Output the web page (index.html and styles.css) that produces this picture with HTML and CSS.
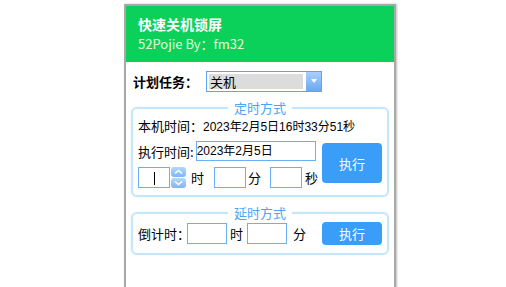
FILE: index.html
```html
<!DOCTYPE html>
<html lang="zh-CN">

<head>
    <meta charset="UTF-8">
    <title>快速关机锁屏</title>
    <link rel="stylesheet" href="styles.css">
</head>

<body>
    <div class="window">
        <div class="header">
            <div class="title">快速关机锁屏</div>
            <div class="sub">52Pojie By：fm32</div>
        </div>

        <div class="content">
            <div class="task_row">
                <span class="task_label">计划任务：</span>
                <div class="select">
                    <span class="select_value">关机</span>
                    <span class="select_btn">
                        <svg width="6" height="4" viewBox="0 0 6 4"><path d="M0 0H6L3 4Z" fill="#fff"/></svg>
                    </span>
                </div>
            </div>

            <fieldset class="group">
                <legend>定时方式</legend>
                <div class="now_row">
                    <span>本机时间：</span><span class="now_value">2023年2月5日16时33分51秒</span>
                </div>
                <div class="timed">
                    <div class="timed_left">
                        <div class="exec_row">
                            <span>执行时间:</span>
                            <div class="input date_input">2023年2月5日</div>
                        </div>
                        <div class="hms_row">
                            <div class="input small caret_box"><span class="caret"></span></div>
                            <svg class="spin" width="15" height="21" viewBox="0 0 15 21">
                                <defs>
                                    <linearGradient id="sg" x1="0" y1="0" x2="0" y2="1">
                                        <stop offset="0" stop-color="#b4d8ff"/>
                                        <stop offset="1" stop-color="#7cb6f4"/>
                                    </linearGradient>
                                </defs>
                                <rect x="0" y="0" width="15" height="10" rx="3" fill="url(#sg)"/>
                                <rect x="0" y="11" width="15" height="10" rx="3" fill="url(#sg)"/>
                                <path d="M4 6.5L7.5 3.5L11 6.5" stroke="#fff" stroke-width="1.5" fill="none"/>
                                <path d="M4 14.5L7.5 17.5L11 14.5" stroke="#fff" stroke-width="1.5" fill="none"/>
                            </svg>
                            <span class="unit unit_first">时</span>
                            <div class="input small"></div>
                            <span class="unit">分</span>
                            <div class="input small"></div>
                            <span class="unit unit_last">秒</span>
                        </div>
                    </div>
                    <button class="btn btn_big">执行</button>
                </div>
            </fieldset>

            <fieldset class="group group2">
                <legend>延时方式</legend>
                <div class="delay_row">
                    <span class="delay_label">倒计时：</span>
                    <div class="input mid"></div>
                    <span class="dunit">时</span>
                    <div class="input mid"></div>
                    <span class="dunit dunit_last">分</span>
                    <button class="btn btn_small">执行</button>
                </div>
            </fieldset>
        </div>
    </div>
</body>

</html>
```

FILE: styles.css
```css
body {
    margin: 0;
    background-color: #ffffff;
    font-family: "Noto Sans CJK SC", "Liberation Sans", sans-serif;
    font-size: 13px;
    color: #000;
}

.window {
    width: 268px;
    height: 290px;
    margin: 4px 0 0 124px;
    border: 2px solid #a8a8a8;
    border-bottom: none;
    box-shadow: 1px 0 2px rgba(0, 0, 0, 0.25);
    background-color: #fff;
}

.header {
    height: 56px;
    background-color: #0bd05a;
    padding: 9px 0 0 12px;
    box-sizing: border-box;
}

.title {
    color: #fff;
    font-weight: bold;
    font-size: 14px;
    line-height: 18px;
}

.sub {
    color: #e6ffd8;
    font-size: 13px;
    line-height: 18px;
    margin-top: 2px;
}

.content {
    padding: 8px 5px 0 5px;
}

.task_row {
    display: flex;
    align-items: center;
    height: 22px;
    padding-left: 2px;
}

.task_label {
    font-weight: bold;
    width: 73px;
}

.select {
    display: flex;
    width: 114px;
    height: 19px;
    border: 1px solid #5aa6f2;
}

.select_value {
    flex: 1;
    margin: 2px 3px 2px 2px;
    background-color: #dcdcdc;
    line-height: 15px;
    padding-left: 1px;
}

.select_btn {
    width: 15px;
    background: linear-gradient(#a8d0ff, #6aa8f0);
    display: flex;
    align-items: center;
    justify-content: center;
}

.group {
    min-width: 0;
    margin: 9px 0 0 0;
    padding: 0 5px 7px 5px;
    border: 2px solid #c4e6fb;
    border-radius: 6px;
    box-shadow: 0 0 2px #d8effc;
}

.group legend {
    margin: 0 auto;
    padding: 0 6px;
    color: #4ba4f5;
    font-size: 13px;
    line-height: 14px;
}

.now_row {
    height: 20px;
    line-height: 20px;
    margin-top: 1px;
    white-space: nowrap;
}

.now_value {
    font-family: "Liberation Sans", "Noto Sans CJK SC", sans-serif;
    font-size: 12px;
}

.timed {
    display: flex;
    justify-content: space-between;
    margin-top: 5px;
}

.exec_row {
    display: flex;
    align-items: center;
    height: 20px;
    white-space: nowrap;
}

.input {
    flex-shrink: 0;
    border: 1px solid #6bb0f5;
    background-color: #fff;
    box-sizing: border-box;
    height: 20px;
}

.date_input {
    width: 120px;
    margin-left: 2px;
    line-height: 18px;
    font-family: "Liberation Sans", "Noto Sans CJK SC", sans-serif;
    font-size: 12px;
}

.hms_row {
    display: flex;
    align-items: center;
    margin-top: 6px;
    white-space: nowrap;
}

.small {
    width: 32px;
    height: 21px;
}

.caret_box {
    position: relative;
}

.caret {
    position: absolute;
    left: 15px;
    top: 4px;
    width: 1px;
    height: 13px;
    background-color: #000;
}

.spin {
    display: block;
    flex-shrink: 0;
    margin-left: 1px;
}

.unit {
    margin: 0 9px 0 2px;
}

.unit_first {
    margin-left: 5px;
    margin-right: 10px;
}

.unit_last {
    margin-left: 3px;
    margin-right: 0;
}

.btn {
    flex-shrink: 0;
    border: none;
    border-radius: 4px;
    background-color: #3a9df7;
    color: #fff;
    font-family: "Noto Sans CJK SC", sans-serif;
    font-size: 13px;
    padding: 0;
}

.btn_big {
    width: 60px;
    height: 40px;
    margin-top: 2px;
}

.group2 {
    margin-top: 9px;
    padding-bottom: 8px;
}

.delay_row {
    display: flex;
    align-items: center;
    margin-top: 2px;
    white-space: nowrap;
}

.delay_label {
    margin-right: -3px;
}

.mid {
    width: 40px;
    height: 21px;
}

.dunit {
    margin: 0 4px 0 3px;
}

.dunit_last {
    margin-left: 6px;
    margin-right: auto;
}

.btn_small {
    width: 60px;
    height: 23px;
}
```
